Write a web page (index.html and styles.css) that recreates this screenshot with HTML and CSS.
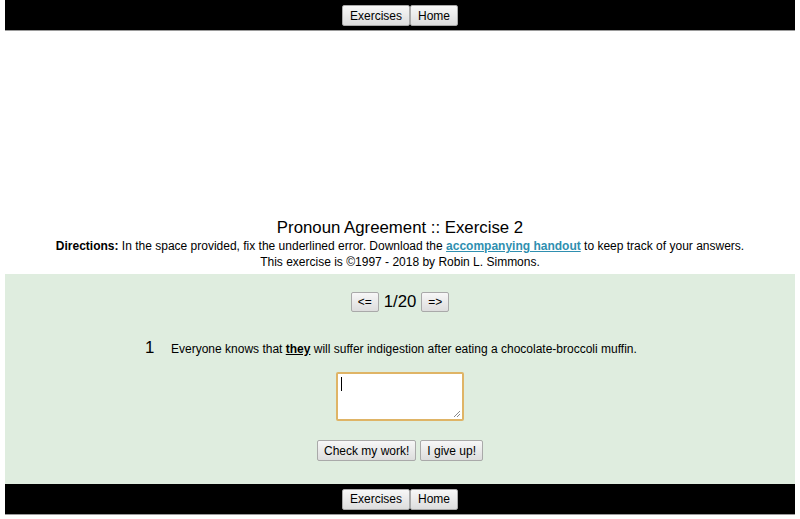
FILE: index.html
```html
<!DOCTYPE html>
<html>
<head>
<meta charset="utf-8">
<link rel="stylesheet" href="styles.css">
</head>
<body>
<div class="bar top"><button class="nb">Exercises</button><button class="nb">Home</button></div>
<div class="spacer"></div>
<div class="head">
  <div class="title">Pronoun Agreement :: Exercise 2</div>
  <div class="dir"><b>Directions:</b> In the space provided, fix the underlined error. Download the <a href="#">accompanying handout</a> to keep track of your answers.</div>
  <div class="dir">This exercise is ©1997 - 2018 by Robin L. Simmons.</div>
</div>
<div class="green">
  <div class="nav"><button class="sb">&lt;=</button><span class="count">1/20</span><button class="sb">=&gt;</button></div>
  <div class="q"><span class="num">1</span><span class="sent">Everyone knows that <b><u>they</u></b> will suffer indigestion after eating a chocolate-broccoli muffin.</span></div>
  <div class="ta-row"><div class="ta"><span class="caret"></span><svg class="grip" width="8" height="8" viewBox="0 0 8 8"><path d="M1 7L7 1M4 7L7 4" stroke="#8a8a8a" stroke-width="1" fill="none"/></svg></div></div>
  <div class="btns"><button class="cb">Check my work!</button><button class="cb">I give up!</button></div>
</div>
<div class="bar bottom"><button class="nb">Exercises</button><button class="nb">Home</button></div>
</body>
</html>
```
FILE: styles.css
```css
html, body { margin: 0; padding: 0; background: #fff; }
body { font-family: "Liberation Sans", Arial, sans-serif; color: #000; padding: 0 5px 0 5px; }
.bar { background: #000; display: flex; justify-content: center; align-items: center; border-bottom: 1px solid #9a9a9a; box-sizing: border-box; }
.top { height: 31px; padding-top: 1px; }
.bottom { height: 31px; }
button { font-family: "Liberation Sans", Arial, sans-serif; font-size: 12px; color: #000; background: linear-gradient(#f7f7f7, #dddddd); border: 1px solid #a9a9a9; border-radius: 2px; padding: 0 6px; margin: 0; height: 21px; }
.nb { height: 21px; padding: 0 7px; }
.spacer { height: 187px; }
.head { text-align: center; height: 56px; }
.title { font-size: 16.8px; line-height: 20px; }
.dir { font-size: 12px; line-height: 16px; }
.dir a { color: #2f8fb0; font-weight: bold; text-decoration: underline; }
.green { background: #dfeddf; height: 210px; padding-top: 17px; box-sizing: border-box; }
.nav { display: flex; justify-content: center; align-items: center; height: 21px; }
.sb { height: 20px; padding: 0 6px; font-size: 12px; }
.count { font-size: 16.8px; margin: 0 5px; line-height: 20px; }
.q { display: flex; align-items: baseline; margin-top: 26px; padding-left: 140px; height: 22px; }
.num { font-size: 16.8px; width: 26px; }
.sent { font-size: 12px; }
.ta-row { display: flex; justify-content: center; margin-top: 12px; }
.ta { width: 128px; height: 49px; box-sizing: border-box; background: #fff; border: 2px solid #dfb466; border-radius: 2px; position: relative; }
.caret { position: absolute; left: 3px; top: 3px; width: 1px; height: 14px; background: #000; }
.grip { position: absolute; right: 1px; bottom: 1px; }
.btns { display: flex; justify-content: center; gap: 4px; margin-top: 19px; }
.cb { height: 21px; padding: 0 6px; }
```
